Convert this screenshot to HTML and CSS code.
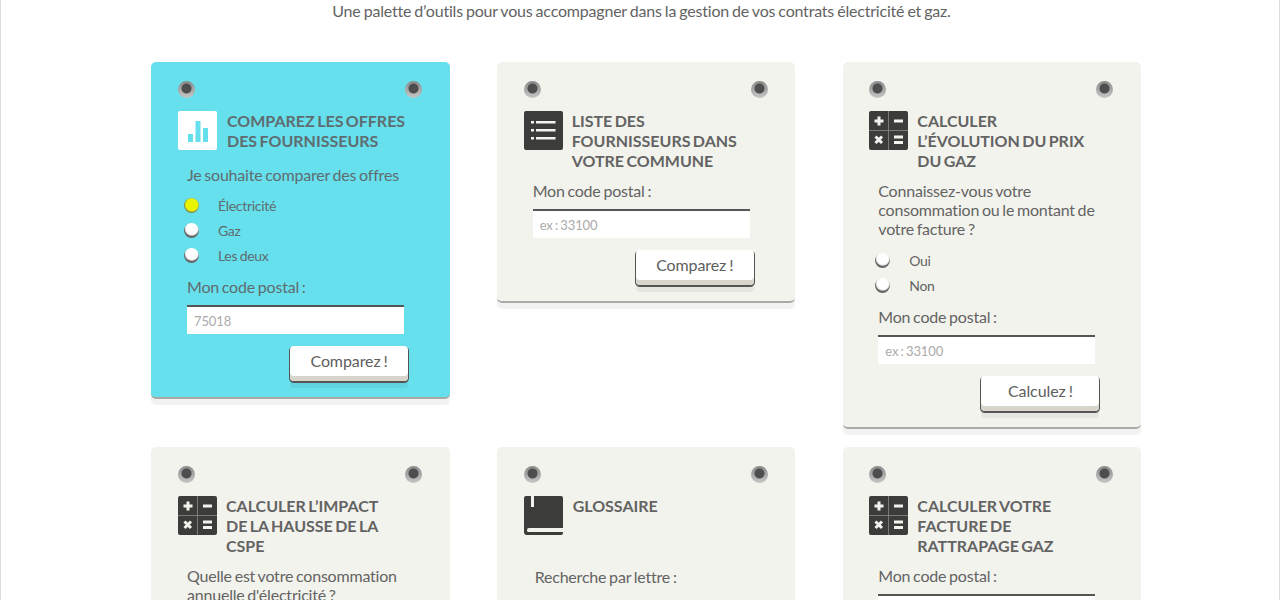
FILE: index.html
```html
<!DOCTYPE html>
<html lang="fr">
<head>
<meta charset="utf-8">
<title>Outils</title>
<link rel="stylesheet" href="styles.css">
</head>
<body>
<main class="page">
  <p class="intro">Une palette d’outils pour vous accompagner dans la gestion de vos contrats électricité et gaz.</p>
  <div class="grid">

    <form class="card card-active">
      <div class="rivets"><span class="rivet"></span><span class="rivet"></span></div>
      <div class="head">
        <svg class="icon" viewBox="0 0 39 39"><rect width="39" height="39" rx="2" fill="#fff"/><rect x="10" y="23" width="5" height="8" fill="#66e0ec"/><rect x="17.500" y="10" width="5" height="21" fill="#66e0ec"/><rect x="25" y="17" width="5" height="14" fill="#66e0ec"/></svg>
        <h2 class="title">COMPAREZ LES OFFRES DES FOURNISSEURS</h2>
      </div>
      <div class="body body-wide">
        <p class="label">Je souhaite comparer des offres</p>
        <div class="radios">
          <label class="radio-row"><input class="radio" type="radio" name="a" checked>Électricité</label>
          <label class="radio-row"><input class="radio" type="radio" name="a">Gaz</label>
          <label class="radio-row"><input class="radio" type="radio" name="a">Les deux</label>
        </div>
        <p class="label label-tight">Mon code postal :</p>
        <input class="field" type="text" placeholder="75018">
        <div class="actions"><button class="btn" type="button">Comparez !</button></div>
      </div>
    </form>

    <form class="card">
      <div class="rivets"><span class="rivet"></span><span class="rivet"></span></div>
      <div class="head head-narrow">
        <svg class="icon" viewBox="0 0 39 39"><rect width="39" height="39" rx="2" fill="#3c3c3a"/><g fill="#f3f3ee"><rect x="7" y="10" width="3" height="2.500"/><rect x="7" y="18" width="3" height="2.500"/><rect x="7" y="26" width="3" height="2.500"/><rect x="12" y="10" width="19.500" height="2.500"/><rect x="12" y="18" width="19.500" height="2.500"/><rect x="12" y="26" width="19.500" height="2.500"/></g></svg>
        <h2 class="title title-narrow">LISTE DES FOURNISSEURS DANS VOTRE COMMUNE</h2>
      </div>
      <div class="body">
        <p class="label">Mon code postal :</p>
        <input class="field" type="text" placeholder="ex : 33100">
        <div class="actions"><button class="btn" type="button">Comparez !</button></div>
      </div>
    </form>

    <form class="card">
      <div class="rivets"><span class="rivet"></span><span class="rivet"></span></div>
      <div class="head head-narrow">
        <svg class="icon" viewBox="0 0 39 39"><rect width="39" height="39" rx="2" fill="#3c3c3a"/><path d="M19.500 0v39M0 19.500h39" stroke="#8a8a86" stroke-width=".8"/><path d="M10 5.500v9M5.500 10h9M25 10h9M6.500 25.500l6.500 6.500M13 25.500l-6.500 6.500M25 26h9M25 31.500h9" stroke="#f3f3ee" stroke-width="3" fill="none"/></svg>
        <h2 class="title title-narrow">CALCULER L’ÉVOLUTION DU PRIX DU GAZ</h2>
      </div>
      <div class="body">
        <p class="label label-multi">Connaissez-vous votre consommation ou le montant de votre facture ?</p>
        <div class="radios">
          <label class="radio-row"><input class="radio" type="radio" name="c">Oui</label>
          <label class="radio-row"><input class="radio" type="radio" name="c">Non</label>
        </div>
        <p class="label label-tight">Mon code postal :</p>
        <input class="field" type="text" placeholder="ex : 33100">
        <div class="actions"><button class="btn" type="button">Calculez !</button></div>
      </div>
    </form>

    <form class="card">
      <div class="rivets"><span class="rivet"></span><span class="rivet"></span></div>
      <div class="head head-narrow">
        <svg class="icon" viewBox="0 0 39 39"><rect width="39" height="39" rx="2" fill="#3c3c3a"/><path d="M19.500 0v39M0 19.500h39" stroke="#8a8a86" stroke-width=".8"/><path d="M10 5.500v9M5.500 10h9M25 10h9M6.500 25.500l6.500 6.500M13 25.500l-6.500 6.500M25 26h9M25 31.500h9" stroke="#f3f3ee" stroke-width="3" fill="none"/></svg>
        <h2 class="title title-narrow">CALCULER L’IMPACT DE LA HAUSSE DE LA CSPE</h2>
      </div>
      <div class="body">
        <p class="label">Quelle est votre consommation annuelle d'électricité ?</p>
      </div>
    </form>

    <form class="card card-long">
      <div class="rivets"><span class="rivet"></span><span class="rivet"></span></div>
      <div class="head">
        <svg class="icon" viewBox="0 0 39 39"><path d="M2 0h5v11h3V0h27a2 2 0 0 1 2 2v30H5a2 2 0 0 0-2 2v.5A1.500 1.500 0 0 0 4.500 36H39v1a2 2 0 0 1-2 2H3a3 3 0 0 1-3-3V2a2 2 0 0 1 2-2z" fill="#3c3c3a"/></svg>
        <h2 class="title">GLOSSAIRE</h2>
      </div>
      <div class="body body-book">
        <p class="label">Recherche par lettre :</p>
      </div>
    </form>

    <form class="card">
      <div class="rivets"><span class="rivet"></span><span class="rivet"></span></div>
      <div class="head head-narrow">
        <svg class="icon" viewBox="0 0 39 39"><rect width="39" height="39" rx="2" fill="#3c3c3a"/><path d="M19.500 0v39M0 19.500h39" stroke="#8a8a86" stroke-width=".8"/><path d="M10 5.500v9M5.500 10h9M25 10h9M6.500 25.500l6.500 6.500M13 25.500l-6.500 6.500M25 26h9M25 31.500h9" stroke="#f3f3ee" stroke-width="3" fill="none"/></svg>
        <h2 class="title title-narrow">CALCULER VOTRE FACTURE DE RATTRAPAGE GAZ</h2>
      </div>
      <div class="body">
        <p class="label">Mon code postal :</p>
        <input class="field" type="text" placeholder="ex : 33100">
      </div>
    </form>

  </div>
</main>
</body>
</html>
```
FILE: styles.css
```css
* { box-sizing: border-box; }
html, body { margin: 0; height: 600px; overflow: hidden; background: #fff; }
body { font-family: Lato, "Liberation Sans", sans-serif; color: #636363; }
.page {
  width: 1280px;
  min-height: 600px;
  border-left: 1px solid #ddd;
  border-right: 1px solid #ddd;
  padding-top: 1px;
}
.intro {
  margin: 0;
  padding-left: 3px;
  text-align: center;
  font-size: 16px;
  line-height: 20px;
  letter-spacing: -.2px;
  word-spacing: -.8px;
}
.grid {
  display: grid;
  grid-template-columns: repeat(3, 298.500px);
  column-gap: 47.170px;
  row-gap: 18px;
  align-items: start;
  margin: 41px 0 0 150.300px;
}
.card {
  display: block;
  background: #f3f3ee;
  border-bottom: 2px solid #a9a9a6;
  border-radius: 5px;
  box-shadow: 0 6px 0 rgba(0, 0, 0, .05);
  padding: 18.500px 26.700px 16px;
}
.card-active { background: #66e0ec; color: #5f6c70; }
.card-long { min-height: 200px; }
.rivets { display: flex; justify-content: space-between; margin-bottom: 13.500px; padding-right: 1px; }
.rivet {
  width: 17px;
  height: 17px;
  border-radius: 50%;
  background: radial-gradient(circle at 50% 44%, #4e4e4e 0 4.500px, rgba(78, 78, 78, 0) 5.500px), linear-gradient(#8a8a8a, #c6c6c6);
}
.head { display: flex; gap: 10px; align-items: flex-start; }
.head-narrow { gap: 9px; }
.icon { width: 39px; height: 39px; flex: none; display: block; }
.title {
  margin: 0;
  font-size: 16px;
  line-height: 20px;
  font-weight: 700;
  letter-spacing: 0;
  word-spacing: -1.500px;
  color: inherit;
  max-width: 190px;
}
.title-narrow { max-width: 172px; }
.body { padding: 10px 19px 0 9px; }
.body-wide { padding-top: 14px; }
.label {
  margin: 0;
  font-size: 16px;
  line-height: 19px;
  letter-spacing: -.2px;
  word-spacing: -1.100px;
  color: inherit;
}
.label-multi { margin-right: -8px; padding-bottom: 1px; }
.label-tight { margin-top: 9px; }
.radios { margin: 9px 0 0 -3px; }
.radio-row {
  display: flex;
  align-items: center;
  height: 25px;
  gap: 19px;
  font-size: 14px;
  letter-spacing: -.3px;
  word-spacing: -.8px;
}
.radio {
  appearance: none;
  -webkit-appearance: none;
  margin: 0;
  width: 15px;
  height: 15px;
  border-radius: 50%;
  background: radial-gradient(circle at 52% 38%, #fff 0 5.500px, #ddd 6.500px, #666 7.500px);
  flex: none;
}
.radio:checked {
  background: radial-gradient(circle at 52% 45%, #e8f400 0 6px, #7f8a50 7.500px);
}
.field {
  display: block;
  width: 100%;
  height: 29px;
  margin-top: 9px;
  border: 0;
  border-top: 2px solid #555;
  border-radius: 0;
  background: #fff;
  padding: 0 7px;
  font: 13px Lato, "Liberation Sans", sans-serif;
  letter-spacing: -.1px;
  word-spacing: -1px;
  color: #555;
}
.field::placeholder { color: #aaa; opacity: 1; }
.actions { display: flex; justify-content: flex-end; margin: 12px -4px 0 0; }
.btn {
  width: 118px;
  height: 35px;
  border: 0;
  border-radius: 4px;
  background: #fff;
  font: 16px Lato, "Liberation Sans", sans-serif;
  letter-spacing: -.1px;
  word-spacing: -1px;
  color: #5e5e5e;
  padding: 0 0 6px;
  box-shadow: inset 0 -5px 0 #d8d6cc, -1px 1px 0 #555, 1px 1px 0 #555, 0 2px 0 #555, 0 7px 0 rgba(0, 0, 0, .05);
}
.body-book { padding: 32px 19px 0 11px; }
```
